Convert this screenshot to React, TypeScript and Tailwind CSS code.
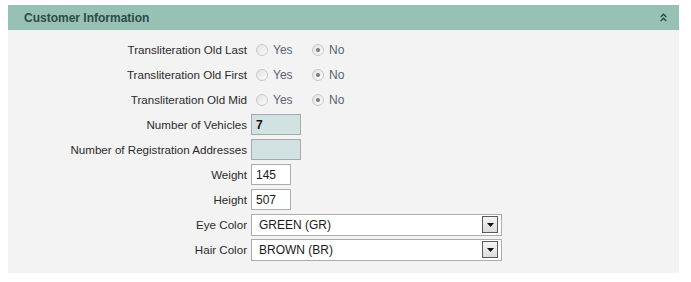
import React from 'react';

const font = { fontFamily: '"Liberation Sans", Arial, sans-serif' };

const Radio = ({ checked }: { checked?: boolean }) => (
  <span className="inline-flex h-[12px] w-[12px] items-center justify-center rounded-full border border-[#c8c8c8] bg-gradient-to-br from-[#e2e2e2] to-[#fbfbfb]">
    {checked && <span className="h-[4px] w-[4px] rounded-full bg-[#7a7a7a]" />}
  </span>
);

const Row = ({ label, children }: { label: string; children: React.ReactNode }) => (
  <div className="flex h-[25px] items-center">
    <div className="w-[239px] shrink-0 text-right text-[11.6px] text-[#2b2b2b]">{label}</div>
    <div className="ml-[4px] flex items-center">{children}</div>
  </div>
);

const YesNo = () => (
  <div className="flex items-center pl-[5px] text-[12px] text-[#5a6472]">
    <label className="flex w-[56px] items-center gap-[5px]">
      <Radio /> Yes
    </label>
    <label className="flex items-center gap-[5px]">
      <Radio checked /> No
    </label>
  </div>
);

const Select = ({ value }: { value: string }) => (
  <div className="flex h-[22px] w-[251px] items-center justify-between border border-[#acacac] bg-white pl-[7px] pr-[3px] text-[12px] text-[#1a1a1a]">
    <span>{value}</span>
    <span className="flex h-[17px] w-[16px] items-center justify-center border border-[#5a5a5a] bg-gradient-to-b from-[#f4f4f4] to-[#dcdcdc]">
      <svg width="7" height="4" viewBox="0 0 7 4">
        <path d="M0 0h7L3.5 4z" fill="#111" />
      </svg>
    </span>
  </div>
);

export default function App() {
  return (
    <div className="h-[282px] w-[691px] bg-white pl-[8px] pt-[5px]" style={font}>
      <div className="w-[671px]">
        <div className="flex h-[25px] items-center justify-between bg-[#98c1b5] pl-[16px] pr-[12px]">
          <span className="text-[12px] font-bold text-[#2c4b47]">Customer Information</span>
          <svg width="7" height="9" viewBox="0 0 7 9" fill="none" stroke="#2c4b47" strokeWidth="1.4">
            <path d="M0.7 4L3.5 1.2 6.3 4M0.7 8L3.5 5.2 6.3 8" />
          </svg>
        </div>
        <div className="bg-[#f3f3f3] pb-[11px] pt-[7px]">
          <Row label="Transliteration Old Last"><YesNo /></Row>
          <Row label="Transliteration Old First"><YesNo /></Row>
          <Row label="Transliteration Old Mid"><YesNo /></Row>
          <Row label="Number of Vehicles">
            <div className="flex h-[21px] w-[50px] items-center border border-[#a9a9a9] bg-[#d2e1e1] pl-[4px] text-[12px] font-bold text-[#111]">7</div>
          </Row>
          <Row label="Number of Registration Addresses">
            <div className="h-[21px] w-[50px] border border-[#a9a9a9] bg-[#d2e1e1]" />
          </Row>
          <Row label="Weight">
            <div className="flex h-[21px] w-[40px] items-center border border-[#acacac] bg-white pl-[4px] text-[12px] text-[#1a1a1a]">145</div>
          </Row>
          <Row label="Height">
            <div className="flex h-[21px] w-[40px] items-center border border-[#acacac] bg-white pl-[4px] text-[12px] text-[#1a1a1a]">507</div>
          </Row>
          <Row label="Eye Color"><Select value="GREEN (GR)" /></Row>
          <Row label="Hair Color"><Select value="BROWN (BR)" /></Row>
        </div>
      </div>
    </div>
  );
}
